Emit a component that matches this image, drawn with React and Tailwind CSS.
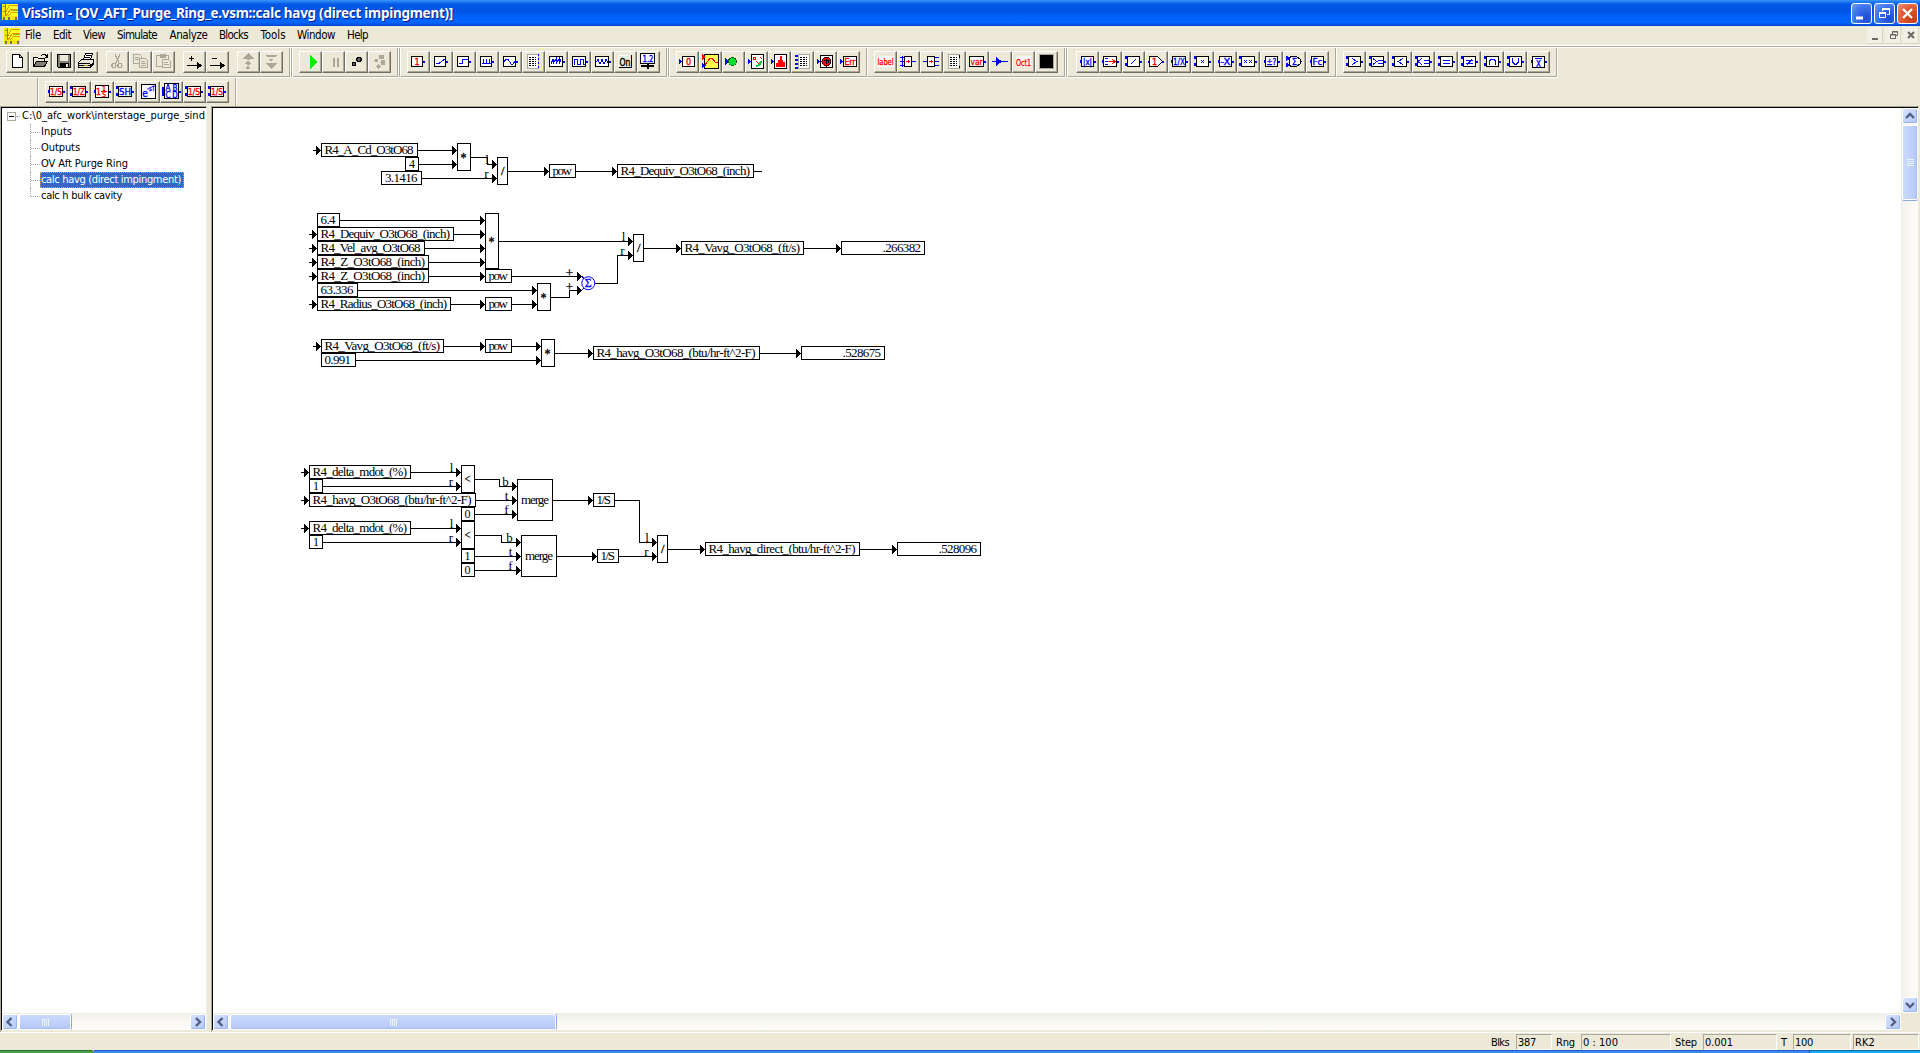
import React, { useLayoutEffect, useRef } from "react";

const UI = "font-['DejaVu_Sans_Condensed','DejaVu_Sans','Noto_Sans',sans-serif]";

/* Text whose tracking is adjusted so that it fills a given width. */
function Fit({ w, className = "", children }) {
  const ref = useRef(null);
  useLayoutEffect(() => {
    const el = ref.current;
    el.style.letterSpacing = "0px";
    const natural = el.getBoundingClientRect().width;
    el.style.letterSpacing = (w - natural) / children.length + "px";
  }, [w, children]);
  return (
    <span ref={ref} className={"inline-block whitespace-pre " + className}>
      {children}
    </span>
  );
}

/* ---------- toolbar icons ---------- */
const B = "#0000ff";
const R = "#ff0000";

function T({ x = 11, y = 14, s = 9.5, c = B, w, children }) {
  return (
    <text x={x} y={y} fontSize={s} fill={c} textAnchor="middle" textLength={w} lengthAdjust="spacingAndGlyphs" stroke={c} strokeWidth="0.35" fontFamily="'DejaVu Sans Condensed','DejaVu Sans',sans-serif">
      {children}
    </text>
  );
}
function L({ d, c = B, w = 1 }) {
  return <path d={d} stroke={c} strokeWidth={w} fill="none" />;
}
function Box({ x = 4, w = 12, ins = 0, out = true, tri = false, y = 5, h = 10, children }) {
  return (
    <g>
      {ins === 1 && <path d={`M${x - 1} 10.5h1`} stroke={B} strokeWidth="3" />}
      {ins === 2 && <path d={`M${x - 1} 5v3M${x - 1} 12v3`} stroke={B} strokeWidth="2" />}
      {tri && <path d={`M${x - 3} 7l3 3.5l-3 3.5z`} fill={B} />}
      {out && <path d={`M${x + w} 10.5h1.5`} stroke={B} strokeWidth="2" />}
      <rect x={x + 0.5} y={y + 0.5} width={w - 1} height={h} fill="#fff" stroke="#000" />
      {children}
    </g>
  );
}
function Doc({ x = 5, side }) {
  return (
    <g>
      <rect x={x} y="3.5" width="11" height="14" fill="#fff" stroke="#aca899" />
      <path d={`M${x + 2} 6.5h7M${x + 2} 8.5h7M${x + 2} 10.5h7M${x + 2} 12.5h7M${x + 2} 14.5h7`} stroke="#000" strokeDasharray="2 1" />
      {side === "right" && <path d={`M${x + 11.5} 3v15`} stroke={B} strokeWidth="1.5" strokeDasharray="2 2" />}
      {side === "left" && <path d={`M${x - 2} 3.5v14`} stroke={B} strokeWidth="3" strokeDasharray="2 2" />}
      {side === "thumb" && <path d={`M${x + 11} 4v3M${x + 11} 15v2`} stroke="#000" />}
    </g>
  );
}

const ICONS = {
  new: <path d="M6.5 3.5h7l3 3v10h-10zM13.5 3.5v3h3" fill="#fff" stroke="#000" />,
  open: (
    <g>
      <path d="M4.5 15.5v-9h4l1 1h6v3" fill="#ece9d8" stroke="#000" />
      <path d="M4.5 15.5l3-5h11l-3 5z" fill="#808070" stroke="#000" />
      <path d="M12 4.5l2-1h2l2 2M18.5 3v3h-3" fill="none" stroke="#000" />
    </g>
  ),
  save: (
    <g>
      <path d="M5.5 3.5h13v13h-12l-1-1z" fill="#808070" stroke="#000" />
      <path d="M8 4h8v6h-8z" fill="#ece9d8" />
      <path d="M8 12h9v5h-9z" fill="#000" />
      <path d="M14 13h2v3h-2z" fill="#ece9d8" />
    </g>
  ),
  print: (
    <g>
      <path d="M8.5 8.5l2-6h7l-2 6" fill="#fff" stroke="#000" />
      <path d="M10 6.5h5M11 4.5h5" stroke="#000" />
      <path d="M3.5 11.5l3-3h12v5l-3 3h-12z" fill="#ece9d8" stroke="#000" />
      <path d="M4 12.5h11M4 14.5h11M15.5 13v3l3-5" stroke="#000" fill="none" />
      <path d="M9 14h4" stroke="#b0a000" />
    </g>
  ),
  cut: (
    <g fill="none" stroke="#aca899" strokeWidth="1.3">
      <path d="M9 3l4 9M14 3l-4 9" />
      <circle cx="8" cy="14.5" r="2" />
      <circle cx="14" cy="14.5" r="2" />
    </g>
  ),
  copy: (
    <g fill="#ece9d8" stroke="#aca899">
      <path d="M4.5 3.5h6l2 2v7h-8zM6 6.5h4M6 8.5h4" />
      <path d="M10.5 7.5h6l2 2v7h-8zM12 10.5h4M12 12.5h5M12 14.5h5" />
    </g>
  ),
  paste: (
    <g fill="#ece9d8" stroke="#aca899">
      <path d="M4.5 4.5h12v11h-12z" />
      <path d="M8 3.5h5v3h-5z" fill="#aca899" />
      <path d="M10.5 8.5h6l2 2v6h-8zM12 11.5h4M12 13.5h5" />
    </g>
  ),
  plus: (
    <g stroke="#000" fill="#000">
      <path d="M5.5 7.5h5M8 5v5M4 14.5h12" />
      <path d="M14 11l5 3.500l-5 3.500z" stroke="none" />
    </g>
  ),
  minus: (
    <g stroke="#000" fill="#000">
      <path d="M5.5 7.5h5M4 14.5h12" />
      <path d="M14 11l5 3.500l-5 3.500z" stroke="none" />
    </g>
  ),
  top: <path d="M11 2l6 6h-4.500v1h-3v-1h-4.500zM11 9.500l3 3.500h-6zM9.500 13h3v1h-3zM10 15h2l1 3h-4z" fill="#aca899" />,
  bottom: <path d="M5 4h12l-2 2h-8zM8 7.500h6l-3 3.500zM5 12h12l-6 6z" fill="#aca899" />,
  play: <path d="M11 4v14l7-7z" fill="#00f000" />,
  pause: <path d="M12 7v9M16 7v9" stroke="#aca899" strokeWidth="2" />,
  step: (
    <g fill="#606060" stroke="#000">
      <circle cx="14" cy="8.500" r="2.300" />
      <circle cx="9" cy="13" r="1.600" />
    </g>
  ),
  steps: (
    <g fill="#aca899">
      <circle cx="13.500" cy="6" r="2.500" /><circle cx="8.500" cy="9.500" r="2" /><circle cx="15" cy="11.500" r="2.500" /><circle cx="10.500" cy="15.500" r="2.300" />
    </g>
  ),
  const1: <Box><T x={10} c={R} s={9}>1</T></Box>,
  ramp: <Box><L d="M6 12.5h3l5-4h1" /></Box>,
  stepfn: <Box><L d="M6 12.5h3v-4h6" /></Box>,
  pulse: <Box><L d="M6 12.5h9M7.5 12v-4M10.5 12v-4M13.5 12v-4" /></Box>,
  sine: <Box x={4} w={13}><L d="M5 11l2-3h2l3 5h2l2-3" /></Box>,
  table: <Doc side="right" />,
  noise: <Box w={14}><L d="M6 13l2-5v5l3-5v5l3-5v5l2-5" /></Box>,
  square: <Box w={14}><L d="M6 13.5v-5h3v5h3v-5h3v5h2" /></Box>,
  zigzag: <Box w={14}><L d="M5 11l2-2.500l2 4.500l2-4.500l2 4.500l2-4.500l2 3" /></Box>,
  on: (
    <g>
      <path d="M4.5 16.5h13M17.5 4v13" stroke="#000" />
      <path d="M4.5 16v-12h12" stroke="#fff" fill="none" />
      <T y={14.5} s={10} c="#000" w={11}>On</T>
    </g>
  ),
  slider: (
    <g>
      <rect x="3.5" y="2.5" width="14" height="10" fill="#fff" stroke="#000" />
      <T y={11} s={9} w={11}>1.2</T>
      <path d="M4 15h13" stroke="#000" strokeWidth="2" /><path d="M11 13v5" stroke="#000" strokeWidth="2" />
    </g>
  ),
  disp: <Box x={6} w={13} out={false} tri><T x={12.5} c={R} s={9}>0</T></Box>,
  plot: (
    <g>
      <rect x="5.5" y="3.5" width="14" height="14" fill="#ffff50" stroke="#000" />
      <path d="M3 3l4 3l-4 3z" fill={R} /><path d="M3 12l4 2.5l-4 3z" fill={B} />
      <L d="M6 14l5-7h2l3 4h3" c={R} />
    </g>
  ),
  led: (
    <g>
      <path d="M3 7l4 3.500l-4 3.500z" fill={B} /><circle cx="10.5" cy="10.5" r="4" fill="#00e030" stroke="#006000" />
    </g>
  ),
  meter: (
    <g>
      <path d="M3 7l3 3.500l-3 3.500z" fill={B} />
      <rect x="6.5" y="3.5" width="12" height="14" fill="#fff" stroke="#000" />
      <L d="M11 15q4 0 5-5" c="#00d030" w={2} /><L d="M8.500 6.500h2v2h-2zM15 6l2 2M11 10l3 3" c={R} />
    </g>
  ),
  histo: (
    <g>
      <path d="M3 7l3 3.500l-3 3.500z" fill={B} />
      <rect x="6.5" y="3.5" width="12" height="14" fill="#fff" stroke="#000" />
      <path d="M8 16v-4h2v-3h2v-4h2v4h1v2h2v5z" fill={R} />
    </g>
  ),
  docin: <Doc x={7} side="left" />,
  strip: (
    <g>
      <path d="M3 7l3 3.500l-3 3.500z" fill={B} />
      <rect x="6.5" y="4.5" width="12" height="12" fill="#fff" stroke="#000" />
      <circle cx="12.500" cy="10.5" r="4.500" fill={R} stroke="#400000" /><L d="M10 9.500h4M12 8v5M14.500 9v3" c="#000" />
    </g>
  ),
  err: <Box x={6} w={14} out={false} tri><T x={13} y={13.500} c={R} s={8} w={11}>Err</T></Box>,
  label: (
    <g>
      <rect x="3" y="5" width="17" height="11" fill="#fff" />
      <T x={11.5} c={R} y={14} s={9.500} w={16}>label</T>
    </g>
  ),
  demux: (
    <g>
      <path d="M3 6.5h5M3 10.5h5M3 14.500h5M15 10.5h4M5.500 5v11" stroke={B} strokeWidth="1.6" />
      <rect x="7.5" y="5.500" width="7" height="10" fill="#fff" stroke="#000" /><L d="M9 10.500h4M11.500 9v3" c={R} />
    </g>
  ),
  mux: (
    <g>
      <path d="M3 10.5h5M15 6.500h4M15 10.5h4M15 14.500h4" stroke={B} strokeWidth="1.6" />
      <rect x="7.5" y="5.500" width="7" height="10" fill="#fff" stroke="#000" /><L d="M9 10.500h4M11.500 9v3" c={R} />
    </g>
  ),
  doc: <Doc side="thumb" />,
  variable: <Box x={3} w={15}><T x={10.5} c={R} w={12} s={9.500}>var</T></Box>,
  arrow: (
    <g><path d="M3 10.500h16" stroke={B} /><path d="M7 6v9l6-4.500z" fill={B} /></g>
  ),
  oct: (
    <g><rect x="4" y="5" width="15" height="11" fill="#fff" /><T x={11.500} y={14.500} c={R} w={15}>Oct1</T></g>
  ),
  black: <rect x="4.500" y="3.500" width="14" height="14" fill="#000" stroke="#aca899" />,
  abs: <Box x={5} w={13} ins={1}><T x={11.500} w={9}>|x|</T></Box>,
  convert: <Box x={4} w={14} ins={1}><L d="M6 7.500h3M6 10.500h3M6 13.500h3" /><L d="M9 10.500h6M13 8l3 2.500l-3 2.500" c={R} /></Box>,
  divide: <Box x={5} w={13} ins={2}><L d="M9 13l5-5" /></Box>,
  gain: (
    <g>
      <path d="M3 10.500h2M17 10.500h2" stroke={B} strokeWidth="2" />
      <path d="M4.500 5.500h8l5 5l-5 5h-8z" fill="#fff" stroke="#000" /><T x={9.500} c={R} s={9}>1</T>
    </g>
  ),
  inv: <Box x={4} w={14} ins={1}><T x={11} w={12}>1/X</T></Box>,
  mult: <Box x={5} w={13} ins={2}><L d="M10 9l3 3M13 9l-3 3" /></Box>,
  neg: <Box x={5} w={13} ins={1}><T x={11.500} w={10}>-X</T></Box>,
  pow: <Box x={4} w={14} ins={2}><L d="M7 9l3 3M10 9l-3 3M12 9l3 3M15 9l-3 3" /></Box>,
  sign: <Box x={5} w={13} ins={1}><T x={11.500} w={10}>±?</T></Box>,
  sum: (
    <g>
      <path d="M3 5l4 2.500l-4 2zM3 12l4 2l-4 2zM17 10.500h2" fill={B} stroke={B} />
      <path d="M7.500 5.500h6l4 3v4l-4 3h-6l-1-2v-6z" fill="#fff" stroke="#000" /><T x={11.500}>Σ</T>
    </g>
  ),
  unit: <Box x={5} w={13} ins={1}><T x={11.500} y={14} w={10}>Fc</T></Box>,
  gt: <Box x={5} w={13} ins={2}><L d="M9 7.500l5 3l-5 3" /></Box>,
  ge: <Box x={5} w={13} ins={2}><L d="M7 7.500l4 3l-4 3M12 9.500h5M12 12.500h5" /></Box>,
  lt: <Box x={5} w={13} ins={2}><L d="M14 7.500l-5 3l5 3" /></Box>,
  le: <Box x={5} w={13} ins={2}><L d="M10 7.500l-4 3l4 3M12 9.500h5M12 12.500h5" /></Box>,
  eq: <Box x={5} w={13} ins={2}><L d="M8 9.500h7M8 12.500h7" /></Box>,
  ne: <Box x={5} w={13} ins={2}><L d="M8 9.500h7M8 12.500h7M9 14l5-6" /></Box>,
  and: <Box x={5} w={13} ins={2}><L d="M8.500 14v-4l2-2h2l2 2v4" /></Box>,
  or: <Box x={5} w={13} ins={2}><L d="M8.500 7v4l2 2h2l2-2v-4" /></Box>,
  not: <Box x={5} w={13} ins={1} h={11}><L d="M8 7.500h7" /><T x={11.500} y={15.500} s={8}>X</T></Box>,
  int: <Box x={4} w={14} ins={1}><T x={11} c={R} w={12}>1/S</T></Box>,
  delay: <Box x={4} w={14} ins={2}><T x={11} c={R} w={12}>1/Z</T></Box>,
  limint: (
    <Box x={4} w={14} ins={1} y={4} h={12}>
      <T x={7.500} y={13.500} c={R} s={8.500}>1</T><T x={13} y={10} c={R} s={7}>1</T><T x={13} y={16} c={R} s={7}>S</T><L d="M10 10.500h6" c={R} />
    </Box>
  ),
  sh: <Box x={4} w={14} ins={2}><T x={11} w={12}>SH</T></Box>,
  exp: (
    <g>
      <rect x="4.500" y="3.500" width="14" height="14" fill="#fff" stroke="#000" />
      <T x={8} y={16} s={10}>e</T><T x={14} y={10} s={7} w={8}>-sT</T>
    </g>
  ),
  abcd: (
    <g>
      <path d="M3 6v9M20 10v2" stroke={B} strokeWidth="1.500" />
      <rect x="4.500" y="2.500" width="14" height="15" fill="#fff" stroke="#000" />
      <T x={8} y={9.500} s={8}>A</T><T x={15} y={9.500} s={8}>B</T><T x={8} y={17} s={8}>C</T><T x={15} y={17} s={8}>D</T>
    </g>
  ),
  rint: <Box x={4} w={14} ins={2}><T x={11} c={R} w={12}>1/S</T></Box>,
};

function Tools({ names, className = "" }) {
  return (
    <div className={"flex " + className}>
      {names.map((n, i) => (
        <div key={i} className="h-[22px] w-[23px] border-t border-r border-b border-l border-t-white border-r-[#716f64] border-b-[#716f64] border-l-white bg-[#ece9d8] shadow-[inset_-1px_-1px_0_#aca899]">
          <svg width="23" height="22" viewBox="0 0 23 22" className="-mt-px -ml-px block" shapeRendering="crispEdges">{ICONS[n]}</svg>
        </div>
      ))}
    </div>
  );
}

function Sep({ double, className = "" }) {
  return (
    <div className={"flex h-[29px] self-start " + className}>
      <div className="w-px bg-[#aca899]" />
      <div className="w-px bg-white" />
      {double && <><div className="w-px bg-[#aca899]" /><div className="w-px bg-white" /></>}
    </div>
  );
}

/* ---------- application logo ---------- */
function Logo() {
  return (
    <svg width="16" height="16" viewBox="0 0 16 16" className="block" shapeRendering="crispEdges">
      <rect width="16" height="16" fill="#f8e800" />
      <rect x="4" width="12" height="12" fill="#ffff20" />
      <path d="M3.500 0v12M1 2.500h2M1 7.500h2" stroke="#8c8450" />
      <path d="M4 12l4-6l3-1h5" stroke="#f09000" fill="none" />
      <path d="M4 8l3-6l3-1h6M6 12l4-4h6" stroke="#d8a000" fill="none" />
      <path d="M9 6.500h7" stroke="#90c000" />
      <path d="M1 14h2M6 14h2M13 14h2" stroke="#707070" strokeWidth="3" />
    </svg>
  );
}

/* ---------- block diagram: x, y, width, height, text, text start, text end ---------- */
const NODES = [
  [321, 143, 97, 14, "R4_A_Cd_O3tO68", 324.5, 413.5],
  [405, 157, 14, 14, "4", 409, 415],
  [381, 171, 41, 14, "3.1416", 385, 417.500],
  [457, 143, 14, 28, "*", 460.500, 466.500],
  [497, 157, 11, 28, "/", 501, 504.500],
  [549, 164, 27, 14, "pow", 552.500, 572],
  [617, 164, 137, 14, "R4_Dequiv_O3tO68_(inch)", 620.500, 750],
  [317, 213, 23, 14, "6.4", 320.500, 335.500],
  [317, 227, 137, 14, "R4_Dequiv_O3tO68_(inch)", 320.500, 450],
  [317, 241, 108, 14, "R4_Vel_avg_O3tO68", 320.500, 420.500],
  [317, 255, 112, 14, "R4_Z_O3tO68_(inch)", 320.500, 425],
  [317, 269, 112, 14, "R4_Z_O3tO68_(inch)", 320.500, 425],
  [317, 283, 41, 14, "63.336", 320.500, 353.500],
  [317, 297, 134, 14, "R4_Radius_O3tO68_(inch)", 320.500, 447],
  [485, 213, 14, 56, "*", 488.500, 494.500],
  [485, 269, 27, 14, "pow", 488.500, 508],
  [485, 297, 27, 14, "pow", 488.500, 508],
  [537, 283, 14, 28, "*", 540.500, 546.500],
  [633, 234, 11, 28, "/", 637, 640.500],
  [681, 241, 123, 14, "R4_Vavg_O3tO68_(ft/s)", 684.500, 800],
  [841, 241, 84, 14, ".266382", 882.500, 921],
  [321, 339, 123, 14, "R4_Vavg_O3tO68_(ft/s)", 324.500, 440],
  [321, 353, 35, 14, "0.991", 324.500, 351],
  [485, 339, 27, 14, "pow", 488.500, 508],
  [541, 339, 14, 28, "*", 544.500, 550.500],
  [593, 346, 167, 14, "R4_havg_O3tO68_(btu/hr-ft^2-F)", 596.500, 755.500],
  [801, 346, 84, 14, ".528675", 842.500, 881],
  [309, 465, 102, 14, "R4_delta_mdot_(%)", 312.500, 407],
  [309, 479, 14, 14, "1", 313, 319],
  [461, 465, 14, 28, "<", 464.500, 470.500],
  [461, 507, 14, 14, "0", 464.500, 470.500],
  [309, 493, 167, 14, "R4_havg_O3tO68_(btu/hr-ft^2-F)", 312.500, 471.500],
  [517, 479, 36, 42, "merge", 521, 549],
  [593, 493, 22, 14, "1/S", 596.500, 611],
  [309, 521, 102, 14, "R4_delta_mdot_(%)", 312.500, 407],
  [309, 535, 14, 14, "1", 313, 319],
  [461, 521, 14, 28, "<", 464.500, 470.500],
  [461, 549, 14, 14, "1", 464.500, 470.500],
  [461, 563, 14, 14, "0", 464.500, 470.500],
  [521, 535, 36, 42, "merge", 525, 553],
  [597, 549, 22, 14, "1/S", 600.500, 615],
  [657, 535, 11, 28, "/", 661, 664.500],
  [705, 542, 155, 14, "R4_havg_direct_(btu/hr-ft^2-F)", 708.500, 855.500],
  [897, 542, 84, 14, ".528096", 938.500, 977],
];

/* Straight wires ending in an arrow: y, start x, end x. */
const WIRES = [
  [150, 313, 321], [150, 418, 457], [164, 419, 457], [178, 422, 497], [171, 508, 549], [171, 576, 617],
  [220, 340, 485], [234, 309, 317], [234, 454, 485], [248, 309, 317], [248, 425, 485], [262, 309, 317], [262, 429, 485],
  [276, 309, 317], [276, 429, 485], [304, 309, 317], [304, 451, 485], [276, 512, 582], [290, 358, 537], [304, 512, 537],
  [241, 499, 633], [248, 644, 681], [248, 804, 841],
  [346, 313, 321], [346, 444, 485], [346, 512, 541], [360, 356, 541], [353, 555, 593], [353, 760, 801],
  [472, 301, 309], [472, 411, 461], [486, 323, 461], [500, 301, 309], [500, 476, 517], [514, 475, 517], [500, 553, 593],
  [528, 301, 309], [528, 411, 461], [542, 323, 461], [556, 475, 521], [570, 475, 521], [556, 557, 597], [556, 619, 657],
  [549, 668, 705], [549, 860, 897],
];

/* Wires with bends: start x, start y, bend x, end y, end x. */
const BENT = [
  [471, 157, 487, 164, 497], [551, 297, 569, 290, 582], [595, 283, 617, 255, 633],
  [475, 479, 499, 486, 517], [475, 535, 501, 542, 521], [615, 500, 639, 542, 657],
];

const PINS = [
  ["l", 487, 164], ["r", 486.500, 178], ["l", 623.500, 241], ["r", 622.500, 255], ["+", 569.500, 277], ["+", 569.500, 291],
  ["l", 451.500, 472], ["r", 451, 486], ["b", 505.500, 486], ["t", 506.500, 500], ["f", 506.500, 514],
  ["l", 451.500, 528], ["r", 451, 542], ["b", 509.500, 542], ["t", 510.500, 556], ["f", 510.500, 570],
  ["l", 647, 542], ["r", 646.500, 556],
];

function Head({ x, y }) {
  return <path d={`M${x - 5} ${y - 4}L${x} ${y + 0.5}L${x - 5} ${y + 5}z`} fill="#000" />;
}

function Diagram() {
  return (
    <svg width="1688" height="905" viewBox="213 108 1688 905" className="block" fontFamily="'Liberation Serif','Times New Roman',serif" fontSize="13" shapeRendering="crispEdges">
      {WIRES.map(([y, a, b], i) => (
        <g key={i}>
          <path d={`M${a} ${y + 0.5}H${b}`} stroke="#000" />
          <Head x={b} y={y} />
        </g>
      ))}
      {BENT.map(([x, y, m, y2, x2], i) => (
        <g key={i}>
          <path d={`M${x} ${y + 0.5}H${m + 0.5}V${y2 + 0.5}H${x2}`} stroke="#000" fill="none" />
          <Head x={x2} y={y2} />
        </g>
      ))}
      <path d="M754 171.500H762" stroke="#000" />
      {NODES.map(([x, y, w, h, t, a, b], i) => (
        <g key={i}>
          <rect x={x + 0.5} y={y + 0.5} width={w - 1} height={h - 1} fill="#fff" stroke="#000" />
          <text x={a} y={y + h / 2 + (t === "*" ? 5.5 : 4)} fontSize={t === "<" || t === "/" ? 11.5 : t === "*" ? 14 : 13} stroke={t.length === 1 && "*/<".includes(t) ? "#000" : "none"} strokeWidth="0.3" textLength={b - a} lengthAdjust={t.length > 1 ? "spacing" : "spacingAndGlyphs"}>{t}</text>
        </g>
      ))}
      {PINS.map(([t, x, y], i) => (
        <text key={i} x={x} y={y} textAnchor="middle" fontSize="13" stroke="#000" strokeWidth={t === "+" ? 0.3 : 0}>{t}</text>
      ))}
      <g stroke={B} fill="none">
        <circle cx="588.300" cy="283.200" r="6.500" shapeRendering="geometricPrecision" />
        <path d="M582 276.500l2 2M582 290l2-2" />
      </g>
      <text x="588.300" y="287.200" textAnchor="middle" fontSize="12" fill={B} stroke={B} strokeWidth="0.3">Σ</text>
    </svg>
  );
}

/* ---------- scrollbars ---------- */
const CHEV = {
  left: "M9.500 4l-4 4l4 4",
  right: "M6 4l4 4l-4 4",
  up: "M4 10l4-4l4 4",
  down: "M4 6l4 4l4-4",
};
function SBtn({ dir, className = "" }) {
  return (
    <div className={"h-[16px] w-[16px] shrink-0 rounded-[2px] border border-white bg-linear-to-br from-[#d6e2ff] to-[#b3c8f8] shadow-[inset_-1px_-1px_0_#9ab5ea] " + className}>
      <svg width="14" height="14" viewBox="1 1 14 14" className="block"><path d={CHEV[dir]} stroke="#4d6185" strokeWidth="2.400" fill="none" /></svg>
    </div>
  );
}
function HThumb({ className }) {
  return (
    <div className={"flex h-[16px] shrink-0 items-center justify-center gap-px rounded-[2px] border border-white bg-linear-to-b from-[#cbdafd] to-[#b5c8f8] shadow-[1px_0_0_#8fa9dd,inset_0_-1px_0_#a3bcf0] " + className}>
      {[0, 1, 2, 3].map((i) => <div key={i} className="h-[7px] w-px border-t border-white bg-[#eef4fe]" />)}
    </div>
  );
}

const MENU = [
  ["File", "w-[28px]", 16], ["Edit", "w-[30px]", 18], ["View", "w-[34px]", 22], ["Simulate", "w-[52.5px]", 40], ["Analyze", "w-[49.5px]", 38],
  ["Blocks", "w-[41.5px]", 29], ["Tools", "w-[36.5px]", 25], ["Window", "w-[50px]", 38], ["Help", "w-[30px]", 21],
];

const TREE = [["Inputs", 31], ["Outputs", 39], ["OV Aft Purge Ring", 87], ["calc havg (direct impingment)", 140], ["calc h bulk cavity", 81]];

function Field({ className, w, children }) {
  return (
    <div className={"flex h-[16px] items-center border border-t-[#aca899] border-r-white border-b-white border-l-[#aca899] pl-px " + className}>
      <Fit w={w} className="translate-y-px">{children}</Fit>
    </div>
  );
}

export default function App() {
  return (
    <div className={"flex h-[1053px] w-[1920px] flex-col overflow-hidden bg-[#ece9d8] text-[11px] leading-[14px] text-black " + UI}>
      {/* title bar */}
      <div className="flex h-[26px] shrink-0 items-center bg-[linear-gradient(180deg,#3b94fb_0%,#2381f8_6%,#0458e6_16%,#0054e3_45%,#0062f8_65%,#0066ff_85%,#0058ea_93%,#0043cf_100%)] pr-[2px] pl-[2px]">
        <div className="-mt-[2px]"><Logo /></div>
        <Fit w={431} className="ml-[4px] font-['Noto_Sans','Open_Sans',sans-serif] text-[13.5px] font-bold text-white [text-shadow:1px_1px_0_#0a1883]">VisSim - [OV_AFT_Purge_Ring_e.vsm::calc havg (direct impingment)]</Fit>
        <div className="ml-auto flex gap-[2px]">
          <div className="size-[21px] rounded-[3px] border border-white bg-[radial-gradient(circle_at_75%_75%,#1c48d8,#3f74ee_60%,#7ba0f5)]">
            <svg width="19" height="19" className="block"><path d="M4 14h7" stroke="#fff" strokeWidth="3" /></svg>
          </div>
          <div className="size-[21px] rounded-[3px] border border-white bg-[radial-gradient(circle_at_75%_75%,#1c48d8,#3f74ee_60%,#7ba0f5)]">
            <svg width="19" height="19" className="block" fill="none" stroke="#fff"><path d="M7.500 7V4.500h7v6h-2.500M4.500 8.500h6v5h-6z" /><path d="M7 5h8M4 9h7" strokeWidth="2" /></svg>
          </div>
          <div className="size-[21px] rounded-[3px] border border-white bg-[radial-gradient(circle_at_75%_75%,#c83814,#e2603a_60%,#ee9a80)]">
            <svg width="19" height="19" className="block"><path d="M5 5l9 9M14 5l-9 9" stroke="#fff" strokeWidth="2.400" /></svg>
          </div>
        </div>
      </div>

      {/* menu bar */}
      <div className="flex h-[22px] shrink-0 items-center border-b border-white pr-px pl-[4px] shadow-[inset_0_-1px_0_#aca899,inset_0_-2px_0_#fff]">
        <div className="-mt-[2px]"><Logo /></div>
        <div className="-mt-[3px] ml-[5px] flex text-[11.5px]">
          {MENU.map(([t, c, w]) => <div key={t} className={c}><Fit w={w}>{t}</Fit></div>)}
        </div>
        <div className="-mt-[2px] ml-auto flex gap-[2px]">
          {["M5 12h6", "M5.500 7.500h5v4h-5zM7.500 7V4.500h5v4H11M5 8h6M7 5h6", "M5 5l6 6M11 5l-6 6"].map((d, i) => (
            <svg key={i} width="16" height="17" className="border-r border-b border-[#dcd8c4] bg-[#f2f0e6]"><path d={d} stroke="#6a675c" strokeWidth={i === 1 ? 1 : 2} fill="none" /></svg>
          ))}
        </div>
      </div>

      {/* toolbar row 1 */}
      <div className="flex h-[30px] shrink-0 items-start">
        <div className="flex h-[30px] w-[1558px] border-b border-white pt-[3px] shadow-[inset_0_-1px_0_#aca899]">
          <Tools names={["new", "open", "save", "print"]} className="ml-[6px]" />
          <Tools names={["cut", "copy", "paste"]} className="ml-[8px]" />
          <Tools names={["plus", "minus"]} className="ml-[8px]" />
          <Tools names={["top", "bottom"]} className="ml-[8px]" />
          <Sep double className="-mt-[3px] ml-[6px]" />
          <Tools names={["play", "pause", "step", "steps"]} className="ml-[6px]" />
          <Sep double className="-mt-[3px] ml-[6px]" />
          <Tools names={["const1", "ramp", "stepfn", "pulse", "sine", "table", "noise", "square", "zigzag", "on", "slider"]} className="ml-[6px]" />
          <Sep double className="-mt-[3px] ml-[6px]" />
          <Tools names={["disp", "plot", "led", "meter", "histo", "docin", "strip", "err"]} className="ml-[6px]" />
          <Sep className="-mt-[3px] ml-[6px]" />
          <Tools names={["label", "demux", "mux", "doc", "variable", "arrow", "oct", "black"]} className="ml-[6px]" />
          <Sep double className="-mt-[3px] ml-[6px]" />
          <Tools names={["abs", "convert", "divide", "gain", "inv", "mult", "neg", "pow", "sign", "sum", "unit"]} className="ml-[8px]" />
          <Sep className="-mt-[3px] ml-[6px]" />
          <Tools names={["gt", "ge", "lt", "le", "eq", "ne", "and", "or", "not"]} className="ml-[6px]" />
          <Sep className="-mt-[3px] ml-[6px]" />
        </div>
      </div>

      {/* toolbar row 2 */}
      <div className="flex h-[28px] shrink-0">
        <Sep className="ml-[37px]" />
        <Tools names={["int", "delay", "limint", "sh", "exp", "abcd", "rint", "rint"]} className="mt-[3px] ml-[6px]" />
        <Sep className="ml-[6px]" />
      </div>

      {/* workspace */}
      <div className="flex h-[926px] shrink-0">
        <div className="flex w-[207px] flex-col border-t border-r border-l border-t-[#aca899] border-r-[#f4f2e8] border-l-[#aca899]">
          <div className="flex h-[923px] flex-col border-t border-l border-black bg-white">
            <div className="grow">
              <div className="flex h-[16px] items-center overflow-hidden pl-[5px]">
                <div className="flex size-[9px] items-center justify-center border border-[#aca899]"><div className="h-px w-[5px] bg-black" /></div>
                <div className="mr-[2px] w-[4px] border-t border-dotted border-[#aca899]" />
                <Fit w={183}>C:\0_afc_work\interstage_purge_sind</Fit>
              </div>
              {TREE.map(([t, w], i) => (
                <div key={t} className="flex h-[16px] items-center pl-[28px]">
                  <div className={"w-px self-start border-l border-dotted border-[#aca899] " + (i === 4 ? "h-[8px]" : "h-[16px]")} />
                  <div className="w-[9px] border-t border-dotted border-[#aca899]" />
                  <div className={"flex h-[16px] items-center border pr-[2px] " + (i === 3 ? "border-dotted border-[#e0a040] bg-[#316ac5] text-white" : "border-transparent")}>
                    <Fit w={w}>{t}</Fit>
                  </div>
                </div>
              ))}
            </div>
            <div className="flex h-[17px] items-center gap-px border-t border-[#eeede5] bg-linear-to-b from-[#f3f1ec] to-[#fefefb]">
              <SBtn dir="left" /><HThumb className="w-[52px]" /><SBtn dir="right" className="ml-auto" />
            </div>
          </div>
        </div>
        <div className="ml-[4px] flex w-[1708px] flex-col border-t border-l border-[#aca899]">
          <div className="flex h-[923px] w-[1706px] border-t border-l border-black">
            <div className="flex w-[1688px] flex-col bg-white">
              <Diagram />
              <div className="flex h-[17px] items-center gap-px border-t border-[#eeede5] bg-linear-to-b from-[#f0efe8] to-[#fefefb]">
                <SBtn dir="left" /><HThumb className="w-[326px]" /><SBtn dir="right" className="ml-auto" />
              </div>
            </div>
            <div className="flex h-[905px] w-[17px] flex-col items-center border-l border-[#eeede5] bg-linear-to-r from-[#f3f1ec] to-[#fefefb]">
              <SBtn dir="up" />
              <div className="mt-px flex h-[75px] w-[16px] flex-col items-center justify-center gap-px rounded-[2px] border border-white bg-linear-to-r from-[#cbdafd] to-[#b5c8f8] shadow-[0_1px_0_#8fa9dd,inset_-1px_0_0_#a3bcf0]">
                {[0, 1, 2, 3].map((i) => <div key={i} className="h-px w-[7px] bg-[#eef4fe]" />)}
              </div>
              <SBtn dir="down" className="mt-auto" />
            </div>
          </div>
        </div>
      </div>

      {/* status bar */}
      <div className="flex h-[18px] shrink-0 items-center border-t border-white pl-[1491px]">
        <Fit w={18} className="translate-y-px">Blks</Fit>
        <Field className="ml-[7px] w-[36px]" w={18}>387</Field>
        <Fit w={19} className="ml-[4px] translate-y-px">Rng</Fit>
        <Field className="ml-[6px] w-[90px]" w={35}>0 : 100</Field>
        <Fit w={22} className="ml-[4px] translate-y-px">Step</Fit>
        <Field className="ml-[6px] w-[74px]" w={28}>0.001</Field>
        <Fit w={6} className="ml-[4px] translate-y-px">T</Fit>
        <Field className="ml-[6px] w-[58px]" w={18}>100</Field>
        <Field className="ml-[2px] w-[66px]" w={20}>RK2</Field>
      </div>

      {/* top edge of the desktop taskbar */}
      <div className="flex h-[3px] shrink-0">
        <div className="w-[94px] rounded-tr-[3px] border-t border-[#2a7030] bg-[#4ba04b]" />
        <div className="w-[1715px] border-t border-[#2159c8] bg-[#3a8bf0]" />
        <div className="grow border-t border-l border-[#0b5fae] bg-[#12b0f0]" />
      </div>
    </div>
  );
}
